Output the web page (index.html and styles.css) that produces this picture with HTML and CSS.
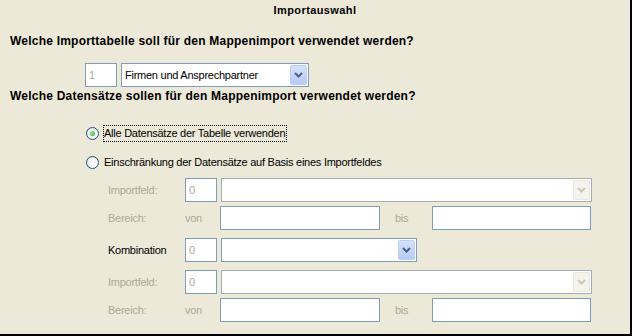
FILE: index.html
```html
<!DOCTYPE html>
<html lang="de">
<head>
  <meta charset="UTF-8" />
  <title>Importauswahl</title>
  <link rel="stylesheet" href="styles.css">
</head>
<body>
  <div class="panel">
    <h1 class="title">Importauswahl</h1>

    <p class="question q-table">Welche Importtabelle soll für den Mappenimport verwendet werden?</p>
    <div class="table-row">
      <span class="num">1</span>
      <div class="combo combo-table">
        <span class="combo-text">Firmen und Ansprechpartner</span>
        <span class="arrow">
          <svg width="9" height="6" viewBox="0 0 9 6"><polyline points="1,1 4.5,4.5 8,1" fill="none" stroke="#4d6185" stroke-width="2"/></svg>
        </span>
      </div>
    </div>

    <p class="question q-records">Welche Datensätze sollen für den Mappenimport verwendet werden?</p>
    <div class="options">
      <label class="radio">
        <span class="dot checked"></span>
        <span class="focus">Alle Datensätze der Tabelle verwenden</span>
      </label>
      <label class="radio radio-second">
        <span class="dot"></span>
        <span class="radio-text">Einschränkung der Datensätze auf Basis eines Importfeldes</span>
      </label>
    </div>

    <div class="filter">
      <div class="frow">
        <span class="flabel off">Importfeld:</span>
        <span class="num">0</span>
        <div class="combo combo-full off">
          <span class="combo-text"></span>
          <span class="arrow">
            <svg width="9" height="6" viewBox="0 0 9 6"><polyline points="1,1 4.5,4.5 8,1" fill="none" stroke="#c9c7ba" stroke-width="2"/></svg>
          </span>
        </div>
      </div>
      <div class="frow">
        <span class="flabel off">Bereich:</span>
        <span class="von off">von</span>
        <span class="field field-von"></span>
        <span class="bis off">bis</span>
        <span class="field field-bis"></span>
      </div>
      <div class="frow frow-gap">
        <span class="flabel">Kombination</span>
        <span class="num">0</span>
        <div class="combo combo-mid">
          <span class="combo-text"></span>
          <span class="arrow">
            <svg width="9" height="6" viewBox="0 0 9 6"><polyline points="1,1 4.5,4.5 8,1" fill="none" stroke="#4d6185" stroke-width="2"/></svg>
          </span>
        </div>
      </div>
      <div class="frow frow-gap">
        <span class="flabel off">Importfeld:</span>
        <span class="num">0</span>
        <div class="combo combo-full off">
          <span class="combo-text"></span>
          <span class="arrow">
            <svg width="9" height="6" viewBox="0 0 9 6"><polyline points="1,1 4.5,4.5 8,1" fill="none" stroke="#c9c7ba" stroke-width="2"/></svg>
          </span>
        </div>
      </div>
      <div class="frow">
        <span class="flabel off">Bereich:</span>
        <span class="von off">von</span>
        <span class="field field-von"></span>
        <span class="bis off">bis</span>
        <span class="field field-bis"></span>
      </div>
    </div>
  </div>
</body>
</html>
```

FILE: styles.css
```css
body {
  margin: 0;
  padding: 0;
  background-color: #ece9d8;
}
.panel {
  width: 630px;
  height: 334px;
  border-right: 2px solid #000;
  border-bottom: 2px solid #000;
  background-color: #ece9d8;
  font-family: "Liberation Sans", Arial, sans-serif;
  font-size: 11px;
  letter-spacing: -0.25px;
  color: #000;
  overflow: hidden;
}
.title {
  margin: 0;
  padding-top: 3px;
  text-align: center;
  font-size: 11px;
  font-weight: bold;
  letter-spacing: 0.4px;
  line-height: 14px;
}
.question {
  margin: 0;
  padding-left: 10px;
  font-size: 12px;
  font-weight: bold;
  letter-spacing: 0.22px;
  line-height: 14px;
}
.q-table {
  margin-top: 17px;
}
.q-records {
  margin-top: 2px;
}
.table-row {
  display: flex;
  gap: 4px;
  margin-top: 15px;
  padding-left: 85px;
}
.num {
  box-sizing: border-box;
  width: 32px;
  height: 24px;
  border: 1px solid #7f9db9;
  background: #fff;
  color: #aca899;
  padding: 4px 0 0 3px;
  line-height: 14px;
}
.combo {
  box-sizing: border-box;
  height: 24px;
  border: 1px solid #7f9db9;
  background: #fff;
  display: flex;
  align-items: center;
  padding: 1px;
}
.combo-text {
  flex: 1;
  padding-left: 2px;
  line-height: 14px;
}
.combo-table {
  width: 188px;
}
.combo-full {
  width: 371px;
}
.combo-mid {
  width: 196px;
}
.combo.off {
  border-color: #a5acb2;
}
.arrow {
  width: 17px;
  height: 20px;
  box-sizing: border-box;
  display: flex;
  align-items: center;
  justify-content: center;
  border-radius: 2px;
  background: linear-gradient(#d5e1fc, #b6cbf7);
  border: 1px solid #b9cdf6;
}
.combo.off .arrow {
  background: #f4f3ee;
  border-color: #eae8de;
}
.options {
  margin-top: 22px;
  padding-left: 86px;
}
.radio {
  display: flex;
  align-items: center;
  height: 16px;
  gap: 5px;
}
.radio-second {
  margin-top: 13px;
}
.dot {
  box-sizing: border-box;
  width: 13px;
  height: 13px;
  border-radius: 50%;
  border: 1px solid #1c5180;
  background: radial-gradient(circle at 60% 60%, #fff 30%, #dcdcd2 100%);
  position: relative;
}
.dot.checked::after {
  content: "";
  position: absolute;
  left: 3px;
  top: 3px;
  width: 5px;
  height: 5px;
  border-radius: 50%;
  background: radial-gradient(circle at 40% 40%, #a0e89a, #21a121);
}
.focus {
  outline: 1px dotted #000;
  padding: 1px 1px 1px 0;
  line-height: 13px;
}
.filter {
  margin-top: 8px;
  padding-left: 108px;
}
.frow {
  display: flex;
  align-items: center;
  height: 24px;
  margin-top: 4px;
}
.frow:first-child {
  margin-top: 0;
}
.frow-gap {
  margin-top: 8px;
}
.frow .num {
  margin-right: 4px;
}
.flabel {
  width: 77px;
}
.off {
  color: #aca899;
}
.von {
  width: 35px;
}
.field {
  box-sizing: border-box;
  height: 24px;
  border: 1px solid #7f9db9;
  background: #fff;
}
.field-von {
  width: 160px;
}
.bis {
  width: 37px;
  padding-left: 15px;
}
.field-bis {
  width: 159px;
}
```
